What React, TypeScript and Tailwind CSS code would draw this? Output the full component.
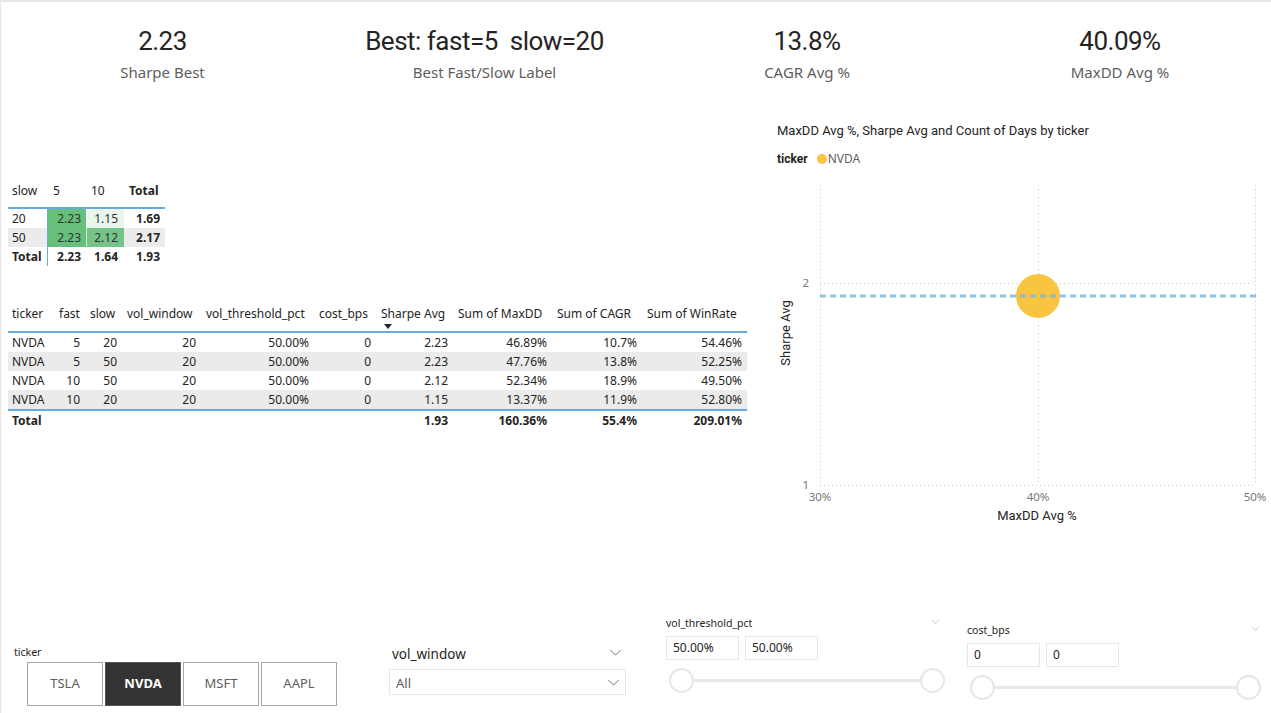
import React from "react";

const din = "[font-family:Roboto,'DejaVu_Sans',sans-serif]";

const cards = [
  { value: "2.23", label: "Sharpe Best", w: "w-[323px]" },
  { value: "Best: fast=5  slow=20", label: "Best Fast/Slow Label", w: "w-[321px]" },
  { value: "13.8%", label: "CAGR Avg %", w: "w-[324px]" },
  { value: "40.09%", label: "MaxDD Avg %", w: "flex-1" },
];

const matrixRows = [
  { label: "20", a: "2.23", b: "1.15", t: "1.69", bg: "", ca: "bg-[#66c07c]", cb: "bg-[#eaf6ec]" },
  { label: "50", a: "2.23", b: "2.12", t: "2.17", bg: "bg-[#ebebeb]", ca: "bg-[#66c07c]", cb: "bg-[#74c487]" },
];

// column widths add up to 739px (8 -> 747)
const cols = [
  { h: "ticker", w: "w-[46px]", left: true },
  { h: "fast", w: "w-[31px]" },
  { h: "slow", w: "w-[37px]" },
  { h: "vol_window", w: "w-[79px]" },
  { h: "vol_threshold_pct", w: "w-[113px]" },
  { h: "cost_bps", w: "w-[62px]" },
  { h: "Sharpe Avg", w: "w-[77px]", sort: true },
  { h: "Sum of MaxDD", w: "w-[99px]" },
  { h: "Sum of CAGR", w: "w-[90px]" },
  { h: "Sum of WinRate", w: "w-[105px]" },
];

const rows = [
  ["NVDA", "5", "20", "20", "50.00%", "0", "2.23", "46.89%", "10.7%", "54.46%"],
  ["NVDA", "5", "50", "20", "50.00%", "0", "2.23", "47.76%", "13.8%", "52.25%"],
  ["NVDA", "10", "50", "20", "50.00%", "0", "2.12", "52.34%", "18.9%", "49.50%"],
  ["NVDA", "10", "20", "20", "50.00%", "0", "1.15", "13.37%", "11.9%", "52.80%"],
];
const totals = ["Total", "", "", "", "", "", "1.93", "160.36%", "55.4%", "209.01%"];

function Chevron({ className, stroke = "#666" }: { className: string; stroke?: string }) {
  return (
    <svg viewBox="0 0 14 8" className={className} fill="none">
      <path d="M1 1 L7 7 L13 1" stroke={stroke} strokeWidth="1" />
    </svg>
  );
}

function Matrix() {
  return (
    <div className="w-[157px] text-[12px] text-[#252423]">
      <div className="flex h-[28px] leading-[19px] border-b-2 border-[#6aa9dd]">
        <div className="w-[40px] pl-[4px]">slow</div>
        <div className="w-[38px] pl-[5px]">5</div>
        <div className="w-[38px] pl-[5px]">10</div>
        <div className="w-[41px] pl-[5px] font-bold">Total</div>
      </div>
      {matrixRows.map((r) => (
        <div key={r.label} className={`flex h-[19px] leading-[19px] ${r.bg}`}>
          <div className="w-[40px] pl-[4px] border-r border-[#6aa9dd]">{r.label}</div>
          <div className={`w-[38px] pr-[5px] text-right text-[#333] ${r.ca}`}>{r.a}</div>
          <div className={`w-[38px] pr-[6px] text-right text-[#333] border-l border-white/60 ${r.cb}`}>{r.b}</div>
          <div className="w-[41px] pr-[5px] text-right font-bold">{r.t}</div>
        </div>
      ))}
      <div className="flex h-[19px] leading-[19px] font-bold">
        <div className="w-[40px] pl-[4px] border-r border-[#6aa9dd]">Total</div>
        <div className="w-[38px] pr-[5px] text-right">2.23</div>
        <div className="w-[38px] pr-[6px] text-right">1.64</div>
        <div className="w-[41px] pr-[5px] text-right">1.93</div>
      </div>
    </div>
  );
}

function DataTable() {
  return (
    <div className="w-[739px] text-[12px] text-[#252423]">
      <div className="flex h-[29px] border-b-2 border-[#6aa9dd]">
        {cols.map((c) => (
          <div key={c.h} className={`${c.w} ${c.left ? "pl-[4px]" : "pl-[5px]"} leading-[19px] whitespace-nowrap`}>
            {c.h}
            {c.sort && (
              <div className="ml-[3px] mt-[1px] w-0 h-0 border-l-[4px] border-r-[4px] border-t-[5px] border-l-transparent border-r-transparent border-t-[#252423]" />
            )}
          </div>
        ))}
      </div>
      {rows.map((r, i) => (
        <div key={i} className={`flex h-[19px] leading-[19px] ${i % 2 === 1 ? "bg-[#ebebeb]" : ""}`}>
          {r.map((v, j) => (
            <div key={j} className={`${cols[j].w} ${j === 0 ? "pl-[4px]" : "pr-[5px] text-right"} whitespace-nowrap`}>
              {v}
            </div>
          ))}
        </div>
      ))}
      <div className="flex h-[21px] leading-[19px] border-t-2 border-[#6aa9dd] font-bold">
        {totals.map((v, j) => (
          <div key={j} className={`${cols[j].w} ${j === 0 ? "pl-[4px]" : "pr-[5px] text-right"} whitespace-nowrap`}>
            {v}
          </div>
        ))}
      </div>
    </div>
  );
}

function Scatter() {
  return (
    <div className="relative w-[511px] h-[357px]">
      <svg className="absolute inset-0" width="511" height="357">
        <g stroke="#c8c8c8" strokeWidth="1" strokeDasharray="1 3">
          <line x1="60.5" y1="17" x2="60.5" y2="317" />
          <line x1="278.5" y1="17" x2="278.5" y2="317" />
          <line x1="495.5" y1="17" x2="495.5" y2="317" />
          <line x1="60" y1="115.5" x2="496" y2="115.5" />
          <line x1="60" y1="317.5" x2="496" y2="317.5" />
        </g>
        <circle cx="278" cy="128" r="22" fill="#f9c440" />
        <line x1="60" y1="128" x2="496" y2="128" stroke="#7db9e8" strokeOpacity="0.85" strokeWidth="3" strokeDasharray="6 4" />
      </svg>
      <div className="absolute left-[30px] w-[19px] top-[108px] text-right text-[11.5px] leading-[14px] text-[#777]">2</div>
      <div className="absolute left-[30px] w-[19px] top-[310px] text-right text-[11.5px] leading-[14px] text-[#777]">1</div>
      <div className={`absolute left-[26px] top-[165px] -translate-x-1/2 -translate-y-1/2 -rotate-90 whitespace-nowrap text-[13px] leading-[18px] text-[#252423] ${din}`}>
        Sharpe Avg
      </div>
      <div className="absolute left-[60px] top-[322px] -translate-x-1/2 text-[11.5px] leading-[14px] text-[#777]">30%</div>
      <div className="absolute left-[278px] top-[322px] -translate-x-1/2 text-[11.5px] leading-[14px] text-[#777]">40%</div>
      <div className="absolute left-[495px] top-[322px] -translate-x-1/2 text-[11.5px] leading-[14px] text-[#777]">50%</div>
      <div className={`absolute left-[277px] top-[339px] -translate-x-1/2 whitespace-nowrap text-[13px] leading-[18px] text-[#252423] ${din}`}>
        MaxDD Avg %
      </div>
    </div>
  );
}

function RangeSlicer({ label, a, b, w, slider, top }: { label: string; a: string; b: string; w: string; slider: string; top: string }) {
  return (
    <div className={`${w} ${top}`}>
      <div className="flex h-[14px] items-center justify-between">
        <span className="text-[10.5px] leading-[14px] text-[#252423]">{label}</span>
        <Chevron className="w-[9px] h-[5px] mr-[2px] -mt-[4px]" stroke="#aaa" />
      </div>
      <div className="mt-[6px] flex gap-[6px]">
        <div className="w-[73px] h-[24px] border border-[#e6e6e6] pl-[6px] text-[12px] leading-[22px] text-[#252423]">{a}</div>
        <div className="w-[73px] h-[24px] border border-[#e6e6e6] pl-[6px] text-[12px] leading-[22px] text-[#252423]">{b}</div>
      </div>
      <div className={`mt-[8px] ml-[3px] ${slider} flex items-center`}>
        <div className="w-[25px] h-[25px] rounded-full border-2 border-[#e6e6e6] bg-white shrink-0" />
        <div className="flex-1 h-[3px] bg-[#e8e8e8]" />
        <div className="w-[25px] h-[25px] rounded-full border-2 border-[#e6e6e6] bg-white shrink-0" />
      </div>
    </div>
  );
}

export default function App() {
  return (
    <div className="w-[1271px] h-[713px] overflow-hidden bg-white border-t-2 border-l border-[#e6e6e6] [font-family:'Noto_Sans',sans-serif]">
      {/* KPI cards */}
      <div className="flex h-[98px] pt-[23px]">
        {cards.map((c) => (
          <div key={c.label} className={`${c.w} flex flex-col items-center`}>
            <div className={`text-[26px] leading-[32px] tracking-[-0.5px] text-[#252423] whitespace-pre ${din}`}>{c.value}</div>
            <div className="mt-[5px] text-[15px] leading-[20px] text-[#605e5c]">{c.label}</div>
          </div>
        ))}
      </div>

      {/* matrix, table and scatter */}
      <div className="flex h-[500px]">
        <div className="w-[759px] pl-[7px]">
          <div className="mt-[81px]">
            <Matrix />
          </div>
          <div className="mt-[38px]">
            <DataTable />
          </div>
        </div>
        <div className="flex-1">
          <div className={`mt-[22px] pl-[17px] text-[13px] leading-[18px] text-[#252423] ${din}`}>
            MaxDD Avg %, Sharpe Avg and Count of Days by ticker
          </div>
          <div className="mt-[10px] pl-[17px] flex items-center h-[18px] text-[12px]">
            <span className={`font-bold text-[#252423] ${din}`}>ticker</span>
            <span className="ml-[9px] w-[10px] h-[10px] rounded-full bg-[#f9c440]" />
            <span className="ml-[1px] text-[#605e5c]">NVDA</span>
          </div>
          <Scatter />
        </div>
      </div>

      {/* slicers */}
      <div className="flex h-[113px]">
        <div className="w-[388px] pl-[13px] pt-[45px]">
          <div className="text-[10.5px] leading-[14px] text-[#252423]">ticker</div>
          <div className="mt-[3px] ml-[13px] flex gap-[2px]">
            {["TSLA", "NVDA", "MSFT", "AAPL"].map((t) =>
              t === "NVDA" ? (
                <div key={t} className="w-[76px] h-[44px] flex items-center justify-center bg-[#333333] border border-[#555] text-white font-bold text-[13px]">
                  {t}
                </div>
              ) : (
                <div key={t} className="w-[76px] h-[44px] flex items-center justify-center bg-white border border-[#a6a6a6] text-[#605e5c] text-[13px]">
                  {t}
                </div>
              )
            )}
          </div>
        </div>

        <div className="w-[237px] pt-[45px]">
          <div className="flex h-[18px] items-center justify-between pl-[3px] pr-[4px]">
            <span className="text-[13.5px] leading-[18px] text-[#252423]">vol_window</span>
            <Chevron className="w-[13px] h-[7px] -mt-[3px]" />
          </div>
          <div className="mt-[6px] h-[26px] border border-[#e6e6e6] flex items-center justify-between pl-[6px] pr-[5px] pt-[4px]">
            <span className="text-[13px] text-[#605e5c]">All</span>
            <Chevron className="w-[13px] h-[7px] -mt-[4px]" />
          </div>
        </div>

        <div className="ml-[40px]">
          <RangeSlicer label="vol_threshold_pct" a="50.00%" b="50.00%" w="w-[276px]" slider="w-[276px]" top="pt-[16px]" />
        </div>
        <div className="ml-[25px]">
          <RangeSlicer label="cost_bps" a="0" b="0" w="w-[295px]" slider="w-[291px]" top="pt-[23px]" />
        </div>
      </div>
    </div>
  );
}
